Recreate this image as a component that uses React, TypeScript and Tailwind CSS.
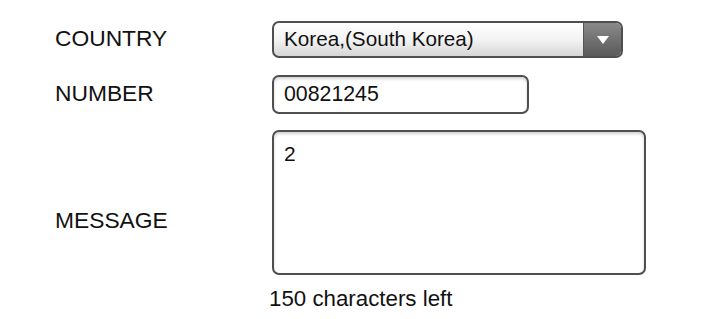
function SelectArrow() {
  return (
    <svg width="14" height="10" viewBox="0 0 14 10" className="block">
      <path d="M1 1 L13 1 L7 9 Z" fill="#ffffff" />
    </svg>
  );
}

export default function App() {
  return (
    <div
      className="w-[720px] h-[319px] bg-white text-[#111] overflow-hidden"
      style={{ fontFamily: '"Liberation Sans", Arial, sans-serif' }}
    >
      <div className="pl-[55px] pt-[21px]">
        <div className="flex items-center h-[37px]">
          <div className="w-[217px] text-[22.8px] leading-none -mt-[2px]">COUNTRY</div>
          <div className="flex w-[351px] h-[37px] rounded-[7px] border-2 border-[#4f4f4f] overflow-hidden bg-gradient-to-b from-white via-[#f3f3f3] to-[#d6d6d6]">
            <div className="flex-1 flex items-center pl-[10px] text-[20.7px] leading-none">
              Korea,(South Korea)
            </div>
            <div className="w-[38px] flex items-center justify-center bg-gradient-to-b from-[#8a8a8a] to-[#5a5a5a] border-l border-[#555]">
              <SelectArrow />
            </div>
          </div>
        </div>

        <div className="flex items-center h-[39px] mt-[17px]">
          <div className="w-[217px] text-[22.8px] leading-none -mt-[2px]">NUMBER</div>
          <div className="flex items-center w-[257px] h-[39px] rounded-[7px] border-2 border-[#4f4f4f] bg-white shadow-[inset_0_2px_3px_rgba(0,0,0,0.18)] pl-[10px] text-[21.3px] leading-none">
            00821245
          </div>
        </div>

        <div className="flex mt-[16px]">
          <div className="w-[217px] text-[22.8px] leading-none pt-[79px]">MESSAGE</div>
          <div className="w-[374px] h-[145px] rounded-[7px] border-2 border-[#4f4f4f] bg-white shadow-[inset_0_2px_3px_rgba(0,0,0,0.18)] pl-[10px] pt-[11px] text-[21px] leading-none">
            2
          </div>
        </div>

        <div className="ml-[214px] mt-[13px] text-[22.3px] leading-none">150 characters left</div>
      </div>
    </div>
  );
}
